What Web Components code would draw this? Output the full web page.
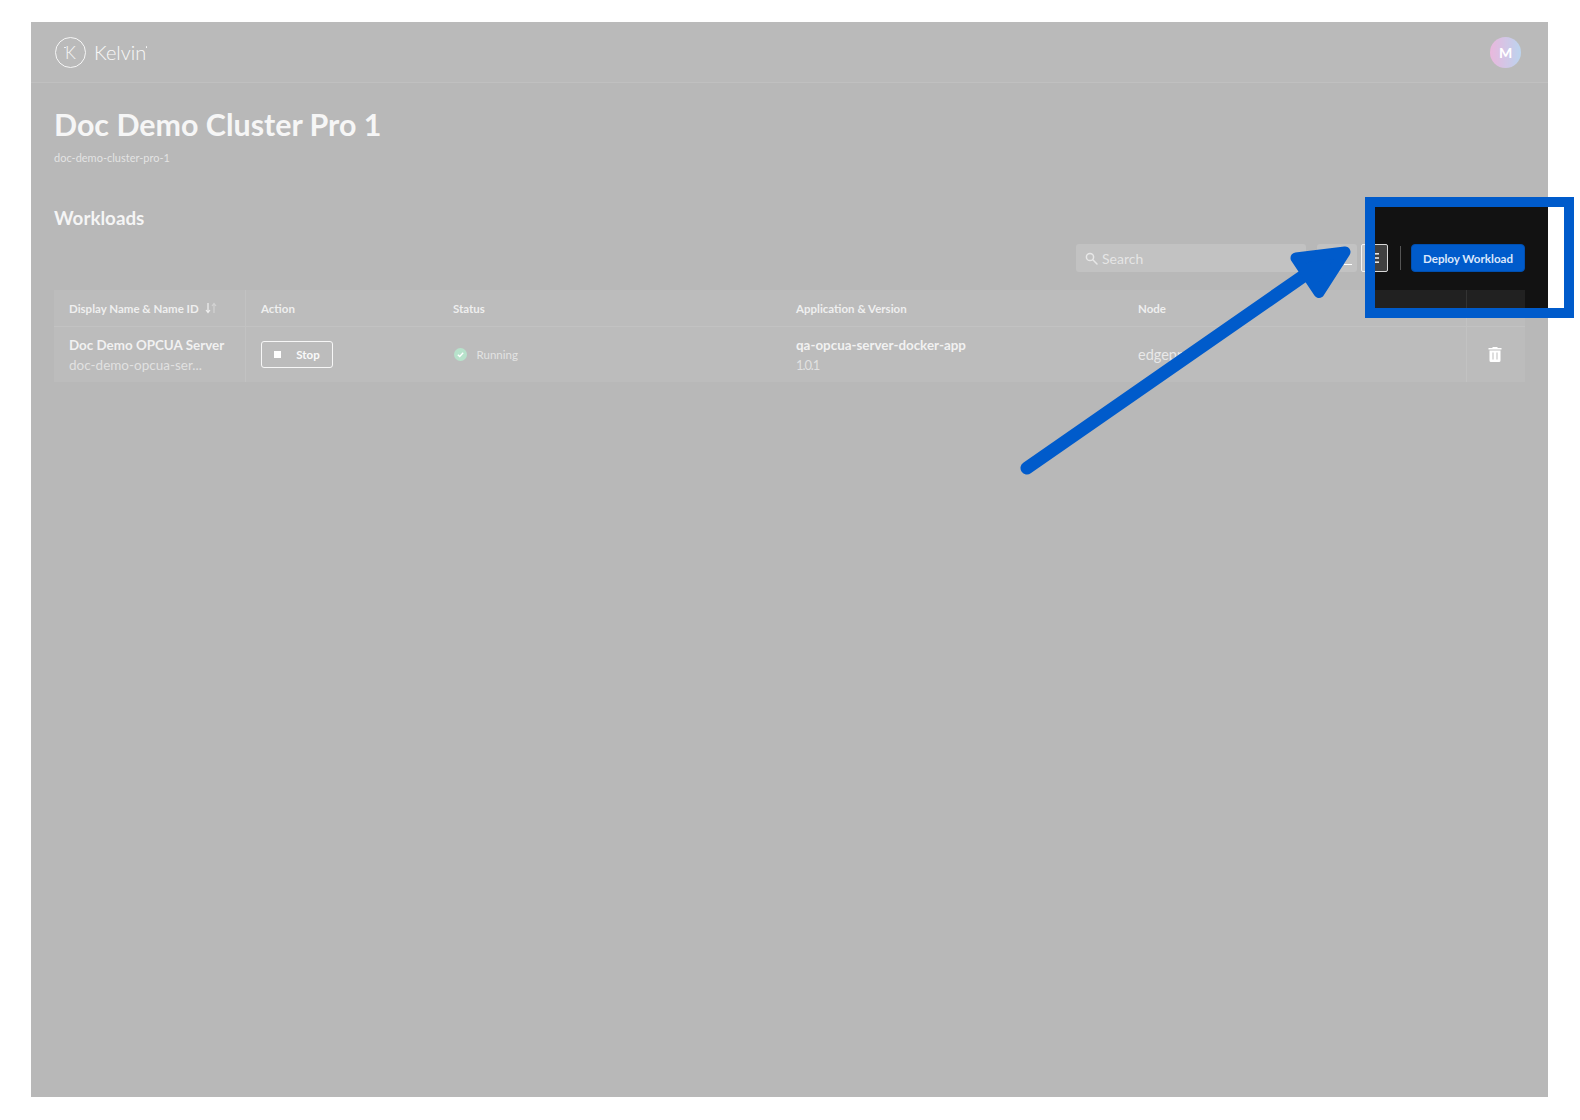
<!DOCTYPE html>
<html lang="en">
<head>
<meta charset="utf-8">
<title>Workloads</title>
<style>
    html, body { margin: 0; height: 100%; background: #fff; }
    body {
        box-sizing: border-box;
        height: 1120px;
        padding: 22px 32px 23px 31px;
        overflow: hidden;
        position: relative;
        font-family: Lato, "Liberation Sans", sans-serif;
        color: #fff;
    }
</style>
</head>
<body>
<template id="kv-app-tmpl">
    <style>
        :host { display: flex; flex-direction: column; height: 100%; background: #121212; }
    </style>
    <slot name="header"></slot>
    <slot></slot>
</template>

<template id="kv-header-tmpl">
    <style>
        :host {
            display: flex; align-items: center; justify-content: space-between;
            height: 60px; padding: 0 27px 0 24px;
            border-bottom: 1px solid #2e2e2e; background: #1a1a1a;
        }
        .logo { display: flex; align-items: center; gap: 8px; }
        .mark {
            position: relative; display: flex; align-items: center; justify-content: center;
            box-sizing: border-box; width: 31px; height: 31px;
            border: 1.5px solid #e0e0e0; border-radius: 50%;
            font-size: 17px; font-weight: 300; color: #e0e0e0;
        }
        .mark::before {
            content: ''; position: absolute; left: 8px; top: 9px;
            width: 1.5px; height: 1.5px; border-radius: 50%; background: #e0e0e0;
        }
        .word { position: relative; font-size: 20px; font-weight: 300; color: #e8e8e8; }
        .word::after {
            content: ''; position: absolute; right: -1px; top: 6px;
            width: 1.5px; height: 1.5px; border-radius: 50%; background: #e8e8e8;
        }
        .avatar {
            display: flex; align-items: center; justify-content: center;
            width: 31px; height: 31px; border-radius: 50%;
            background: linear-gradient(90deg, #b8108c, #1f70c8);
            font-size: 14px; font-weight: 700; color: #fff;
        }
    </style>
    <div class="logo"><span class="mark">K</span><span class="word">Kelvin</span></div>
    <div class="avatar">M</div>
</template>

<template id="kv-page-tmpl">
    <style>
        :host { display: block; padding: 21px 23px 0; }
        h1 { margin: 0; font-size: 30.4px; line-height: 40px; font-weight: 700; color: #e0e0e0; }
        p { margin: 5.5px 0 0; font-size: 11px; line-height: 16px; color: #a4a4a4; }
        h2 { margin: 40.500px 0 0; font-size: 18.800px; line-height: 24px; font-weight: 700; color: #dcdcdc; }
    </style>
    <h1><slot name="title"></slot></h1>
    <p><slot name="subtitle"></slot></p>
    <h2><slot name="section"></slot></h2>
    <slot></slot>
</template>

<template id="kv-toolbar-tmpl">
    <style>
        :host { display: flex; align-items: center; justify-content: flex-end; height: 28px; margin: 14px 0 18px; }
        .search {
            display: flex; align-items: center; gap: 4px; box-sizing: border-box;
            width: 230px; height: 28px; padding-left: 9px;
            border-radius: 3px; background: #333;
            font-size: 14px; color: #a8a8a8;
        }
        .filter {
            display: flex; align-items: flex-end; justify-content: flex-end;
            box-sizing: border-box; width: 40px; height: 28px; margin-left: 11px;
            padding: 0 5px 7px 0; border-radius: 3px; background: #333;
        }
        .filter i { display: block; width: 8px; height: 1.5px; background: #fff; }
        .view {
            display: flex; align-items: center; justify-content: center;
            box-sizing: border-box; width: 27px; height: 28px; margin-left: 4px;
            border: 1.5px solid #d8d8d8; border-radius: 2px; background: #404040;
        }
        .sep { width: 1px; height: 24px; margin: 0 10px 0 12px; background: #555; }
    </style>
    <div class="search">
        <svg width="13" height="13" viewBox="0 0 13 13" fill="none" stroke="#b0b0b0" stroke-width="1.5"><circle cx="5" cy="5" r="3.6"/><path d="M7.8 7.8 12 12" stroke-linecap="round"/></svg>
        <span>Search</span>
    </div>
    <div class="filter"><i></i></div>
    <div class="view">
        <svg width="13" height="12" viewBox="0 0 13 12" fill="#e8e8e8"><rect x="2" y="1" width="9" height="1.6"/><rect x="2" y="5.2" width="9" height="1.6"/><rect x="2" y="9.4" width="9" height="1.6"/></svg>
    </div>
    <div class="sep"></div>
    <slot></slot>
</template>

<template id="kv-button-tmpl">
    <style>
        :host {
            display: inline-flex; align-items: center; justify-content: center;
            box-sizing: border-box; width: 114px; height: 28px;
            border: 1px solid #004fb0; border-radius: 4px; background: #005bcb;
            font-size: 11.6px; font-weight: 700; color: #dbe7fb;
        }
        :host([outline]) {
            width: 72px; height: 27px; gap: 15px; border: 1.5px solid #e4e4e4; border-radius: 3px;
            background: transparent; color: #ececec; font-size: 11.5px;
        }
    </style>
    <slot name="icon"></slot><slot></slot>
</template>

<template id="kv-table-tmpl">
    <style>
        :host { display: grid; grid-template-columns: 192px 192px 343px 342px 343px 59px; }
    </style>
    <slot></slot>
</template>

<template id="kv-th-tmpl">
    <style>
        :host {
            display: flex; align-items: center; gap: 6px; height: 36px; padding-left: 15px;
            background: #212121; border-bottom: 1px solid #333;
            font-size: 11.5px; font-weight: 700; color: #c8c8c8;
        }
        :host([pinned]) { border-right: 1px solid #333; }
        :host([end]) { border-left: 1px solid #333; padding: 0; }
    </style>
    <slot></slot>
</template>

<template id="kv-td-tmpl">
    <style>
        :host {
            display: flex; flex-direction: column; justify-content: center;
            height: 55px; padding-left: 15px; background: #212121;
            font-size: 14.5px; color: #b4b4b4;
        }
        :host([pinned]) { border-right: 1px solid #333; }
        :host([end]) { border-left: 1px solid #333; padding: 0 2px 0 0; align-items: center; }
        ::slotted(b) { font-weight: 700; font-size: 13.4px; line-height: 20px; color: #d0d0d0; }
        ::slotted(span) { font-size: 13.5px; line-height: 20px; color: #9c9c9c; }
        ::slotted(.ver) { font-size: 13px; letter-spacing: -1.1px; }
    </style>
    <slot></slot>
</template>

<template id="kv-status-tmpl">
    <style>
        :host { display: flex; align-items: center; gap: 9.5px; margin-left: 1px; font-size: 11.5px; color: #a0a0a0; }
    </style>
    <svg width="13" height="13" viewBox="0 0 13 13"><circle cx="6.5" cy="6.5" r="6.5" fill="#0f9f52"/><path d="M3.8 6.7 5.7 8.5 9.2 4.8" fill="none" stroke="#fff" stroke-width="1.3"/></svg>
    <slot></slot>
</template>

<template id="kv-spotlight-tmpl">
    <style>
        :host {
            position: absolute; left: 1365px; top: 197px; box-sizing: border-box;
            width: 209px; height: 121px; border: 10px solid #005bcb;
            box-shadow: 0 0 0 3000px rgba(255, 255, 255, .7);
        }
    </style>
</template>

<template id="kv-arrow-tmpl">
    <style>
        :host { position: absolute; left: 0; top: 0; width: 1580px; height: 1120px; pointer-events: none; }
        svg { display: block; }
    </style>
    <svg width="1580" height="1120" fill="#005bcb" stroke="#005bcb" stroke-linecap="round" stroke-linejoin="round">
        <path d="M1027 468 1315 268" stroke-width="13" fill="none"/>
        <path d="M1345 252 1296 258 1319 292.500Z" stroke-width="11"/>
    </svg>
</template>

<script>
    function define(name) {
        customElements.define(name, class extends HTMLElement {
            connectedCallback() {
                if (this.shadowRoot) return;
                this.attachShadow({ mode: 'open' });
                this.shadowRoot.append(document.getElementById(name + '-tmpl').content.cloneNode(true));
            }
        });
    }
    ['kv-app', 'kv-header', 'kv-page', 'kv-toolbar', 'kv-button', 'kv-table', 'kv-th', 'kv-td', 'kv-status', 'kv-spotlight', 'kv-arrow'].forEach(define);
</script>

<kv-app>
    <kv-header slot="header"></kv-header>
    <kv-page>
        <span slot="title">Doc Demo Cluster Pro 1</span>
        <span slot="subtitle">doc-demo-cluster-pro-1</span>
        <span slot="section">Workloads</span>
        <kv-toolbar><kv-button>Deploy Workload</kv-button></kv-toolbar>
        <kv-table>
            <kv-th pinned>Display Name &amp; Name ID
                <svg width="12" height="12" viewBox="0 0 12 12" fill="none" stroke-width="1.2"><path d="M3 1v9M1 8l2 2.5L5 8" stroke="#c8c8c8"/><path d="M9 11V2M7 4l2-2.5L11 4" stroke="#6a6a6a"/></svg>
            </kv-th>
            <kv-th>Action</kv-th>
            <kv-th>Status</kv-th>
            <kv-th>Application &amp; Version</kv-th>
            <kv-th>Node</kv-th>
            <kv-th end></kv-th>

            <kv-td pinned><b>Doc Demo OPCUA Server</b><span>doc-demo-opcua-ser...</span></kv-td>
            <kv-td>
                <kv-button outline style="align-self:flex-start">
                    <svg slot="icon" width="7" height="7"><rect width="7" height="7" fill="#fff"/></svg>Stop
                </kv-button>
            </kv-td>
            <kv-td><kv-status>Running</kv-status></kv-td>
            <kv-td><b>qa-opcua-server-docker-app</b><span class="ver">1.0.1</span></kv-td>
            <kv-td>edgepro</kv-td>
            <kv-td end>
                <svg width="14" height="15" viewBox="0 0 14 15" fill="#fff"><path d="M5 0h4l1 1h3.500v1.600H.5V1H4zM1.500 3.600h11V13.500a1.500 1.500 0 0 1-1.500 1.500H3a1.500 1.500 0 0 1-1.500-1.500z"/><path d="M5 5.500v7M9 5.500v7" stroke="#555" stroke-width="1.300"/></svg>
            </kv-td>
        </kv-table>
    </kv-page>
</kv-app>
<kv-spotlight></kv-spotlight>
<kv-arrow></kv-arrow>
</body>
</html>
